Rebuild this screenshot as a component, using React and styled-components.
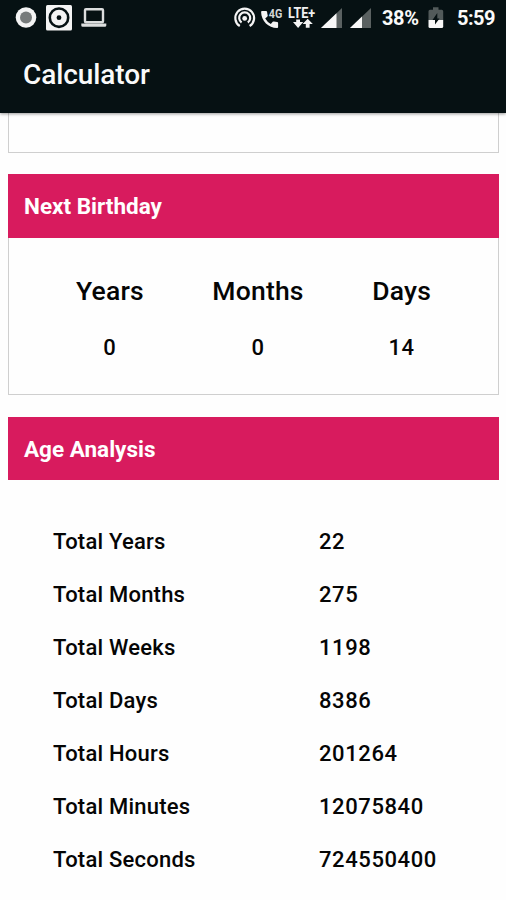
import React from "react";
import styled, { createGlobalStyle } from "styled-components";

const GlobalStyle = createGlobalStyle`
  :root {
    --general-font: Roboto, "Liberation Sans", sans-serif;
    --bar-color: #061113;
    --primary-color: #d81b5e;
    --border-color: #cfcfcf;
    --text-color: #050505;
  }

  * {
    box-sizing: border-box;
  }

  body {
    margin: 0;
    background-color: #fefefe;
    color: var(--text-color);
    font-family: var(--general-font);
  }
`;

const Screen = styled.div`
  width: 506px;
  height: 900px;
  overflow: hidden;
  display: flex;
  flex-direction: column;
`;

const TopBar = styled.header`
  position: relative;
  flex: none;
  height: 113px;
  background-color: var(--bar-color);
  color: #fafafa;
  box-shadow: 0 1px 3px rgba(0, 0, 0, 0.4);
`;

const StatusBar = styled.div`
  height: 36px;
  padding: 0 11px 0 15px;
  display: flex;
  align-items: center;
  justify-content: space-between;

  svg {
    display: block;
    flex: none;
    overflow: visible;
  }
`;

const IconGroup = styled.div`
  display: flex;
  align-items: center;
  gap: ${(props) => props.$gap}px;
`;

const StatusText = styled.span`
  width: 38px;
  margin-left: ${(props) => props.$space}px;
  font-size: 20px;
  font-weight: 700;
  line-height: 36px;
  letter-spacing: ${(props) => props.$spacing}px;
  white-space: nowrap;
`;

const Title = styled.h1`
  margin: 0;
  padding: 0 23px;
  font-size: 28px;
  font-weight: 500;
  line-height: 77px;
  letter-spacing: -0.1px;
`;

const Content = styled.main`
  padding: 0 7px 0 8px;
`;

const Card = styled.section`
  margin-bottom: 21.4px;
`;

const CardTitle = styled.h2`
  margin: 0;
  height: 63.5px;
  padding: 0 16px;
  background-color: var(--primary-color);
  color: #fff;
  font-size: 22.5px;
  font-weight: 700;
  line-height: 65.7px;
`;

const CardBody = styled.div`
  height: ${(props) => props.$height}px;
  border: 1px solid var(--border-color);
  border-top: none;
`;

const Columns = styled(CardBody)`
  display: flex;
  justify-content: space-between;
  padding: 34px 67px 0;
`;

const Column = styled.div`
  display: flex;
  flex-direction: column;
  align-items: center;
`;

const ColumnLabel = styled.span`
  font-size: 26.5px;
  font-weight: 500;
  line-height: 38px;
  letter-spacing: 0.2px;
`;

const ColumnValue = styled.span`
  margin-top: 21px;
  font-size: 22px;
  font-weight: 500;
  line-height: 34px;
  letter-spacing: 0.6px;
`;

const Rows = styled.dl`
  margin: 0;
  padding: 35.3px 45px 0;
`;

const Row = styled.div`
  display: flex;
  height: 53px;
  font-size: 22px;
  font-weight: 500;
  line-height: 53px;
  letter-spacing: 0.22px;

  dt {
    width: 266px;
  }

  dd {
    margin: 0;
    letter-spacing: 0.6px;
  }
`;

const nextBirthday = [
  { label: "Years", value: "0" },
  { label: "Months", value: "0" },
  { label: "Days", value: "14" },
];

const ageAnalysis = [
  { label: "Total Years", value: "22" },
  { label: "Total Months", value: "275" },
  { label: "Total Weeks", value: "1198" },
  { label: "Total Days", value: "8386" },
  { label: "Total Hours", value: "201264" },
  { label: "Total Minutes", value: "12075840" },
  { label: "Total Seconds", value: "724550400" },
];

function RecordIcon() {
  return (
    <svg width="22" height="22" viewBox="0 0 22 22">
      <circle cx="11" cy="10.5" r="10.3" fill="#f4f4f4" />
      <circle cx="11" cy="10.5" r="6" fill="#777b7b" />
    </svg>
  );
}

function DiscIcon() {
  return (
    <svg width="26" height="26" viewBox="0 0 26 26">
      <rect x="0" y="0" width="26" height="25.5" rx="1.5" fill="#f4f4f4" />
      <circle cx="13" cy="12.7" r="9.2" fill="none" stroke="#061113" strokeWidth="2.6" />
      <circle cx="13" cy="12.7" r="2.4" fill="#061113" />
    </svg>
  );
}

function LaptopIcon() {
  return (
    <svg width="26" height="20" viewBox="0 0 26 20">
      <rect x="4" y="1.2" width="18" height="13" rx="1" fill="none" stroke="#dcdede" strokeWidth="2.4" />
      <path d="M0.3 15.4h25v2q0 1.4-1.4 1.4H1.7q-1.4 0-1.4-1.4z" fill="#dcdede" />
    </svg>
  );
}

function HotspotIcon() {
  return (
    <svg width="22" height="22" viewBox="0 0 22 22" fill="none" stroke="#f4f4f4" strokeWidth="2.2">
      <path d="M5.8 19a9.4 9.4 0 1 1 9.8 0" />
      <path d="M7.6 15.5a5.5 5.5 0 1 1 6.2 0" />
      <circle cx="10.7" cy="11.4" r="2.4" fill="#f4f4f4" stroke="none" />
    </svg>
  );
}

function Call4GIcon() {
  return (
    <svg width="22" height="30" viewBox="0 -4 22 30">
      <path
        d="M1 4h4q1 0 1.1 1c.1 1.1.3 2.2.6 3.2q.2.7-.3 1.2L4.2 11.6a13.5 13.5 0 0 0 5.6 5.4l1.9-2.2q.5-.5 1.2-.3c1.1.3 2.1.5 3.2.6q1 .1 1 1V20q0 1-1 1C7.5 21 .2 14 .1 5q0-1 .9-1z"
        fill="#f4f4f4"
      />
      <text x="7.8" y="10.8" fontSize="12.5" fontWeight="700" textLength="13.5" lengthAdjust="spacingAndGlyphs" fill="#d4d6d6">
        4G
      </text>
    </svg>
  );
}

function LteIcon() {
  return (
    <svg width="28" height="34" viewBox="0 -5 28 34">
      <text x="0" y="12.4" fontSize="14.5" fontWeight="700" textLength="27" lengthAdjust="spacingAndGlyphs" fill="#f0f0f0">
        LTE+
      </text>
      <path d="M8.2 13.5h3.8v2.5h3.2l-5.1 6-5.1-6h3.2z" fill="#f4f4f4" />
      <path d="M19.7 12.8l5.1 5.2h-3.2v3.8h-3.8V18h-3.2z" fill="#f4f4f4" />
    </svg>
  );
}

function SignalIcon({ level }) {
  return (
    <svg width="21" height="20" viewBox="0 0 21 20">
      <path d="M21 0V20H0z" fill="#5a6161" />
      <path d={`M${level} ${20 - (level * 20) / 21}V20H0z`} fill="#f8f8f8" />
    </svg>
  );
}

function BatteryIcon() {
  return (
    <svg width="16" height="22" viewBox="0 0 16 22">
      <path d="M5 0.3h5.5v2.5h3.2q1.5 0 1.5 1.5V13H0.5V4.3Q0.5 2.8 2 2.8h3z" fill="#525a5a" />
      <path d="M0.5 13h14.7v6.5q0 1.5-1.5 1.5H2q-1.5 0-1.5-1.5z" fill="#f8f8f8" />
      <path d="M9.3 6v5.5h2.2L7 17.5V13H4.5z" fill="#061113" />
    </svg>
  );
}

export default function App() {
  return (
    <Screen>
      <GlobalStyle />
      <TopBar>
        <StatusBar>
          <IconGroup $gap={9}>
            <RecordIcon />
            <DiscIcon />
            <LaptopIcon />
          </IconGroup>
          <IconGroup $gap={5}>
            <HotspotIcon />
            <Call4GIcon />
            <LteIcon />
            <IconGroup $gap={8}>
              <SignalIcon level={15.5} />
              <SignalIcon level={12} />
              <StatusText $space={3} $spacing={-0.4}>38%</StatusText>
              <BatteryIcon />
              <StatusText $space={5} $spacing={-0.5}>5:59</StatusText>
            </IconGroup>
          </IconGroup>
        </StatusBar>
        <Title>Calculator</Title>
      </TopBar>
      <Content>
        <Card>
          <CardBody $height={40} />
        </Card>
        <Card>
          <CardTitle>Next Birthday</CardTitle>
          <Columns $height={157.3}>
            {nextBirthday.map((item) => (
              <Column key={item.label}>
                <ColumnLabel>{item.label}</ColumnLabel>
                <ColumnValue>{item.value}</ColumnValue>
              </Column>
            ))}
          </Columns>
        </Card>
        <Card>
          <CardTitle>Age Analysis</CardTitle>
          <Rows>
            {ageAnalysis.map((item) => (
              <Row key={item.label}>
                <dt>{item.label}</dt>
                <dd>{item.value}</dd>
              </Row>
            ))}
          </Rows>
        </Card>
      </Content>
    </Screen>
  );
}
